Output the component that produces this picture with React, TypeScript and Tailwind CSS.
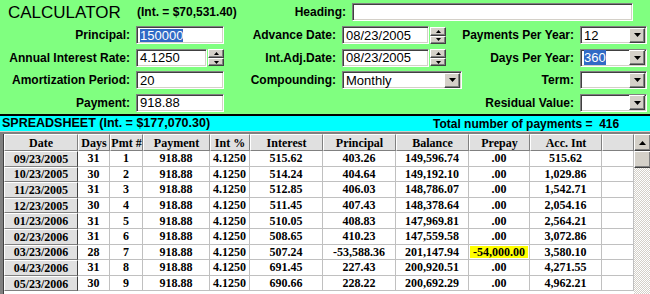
const sunken =
  "bg-white border border-t-[#808080] border-l-[#808080] border-b-white border-r-white shadow-[inset_1px_1px_0_#404040,inset_-1px_-1px_0_#d4d0c8]";
const raised =
  "bg-[#d4d0c8] border border-t-white border-l-white border-r-[#404040] border-b-[#404040] shadow-[inset_-1px_-1px_0_#808080]";

const DownArrow = () => (
  <svg width="7" height="4" viewBox="0 0 7 4">
    <path d="M0 0h7L3.5 4z" fill="#000" />
  </svg>
);

const TinyArrow = ({ up }: { up?: boolean }) => (
  <svg width="5" height="3" viewBox="0 0 5 3">
    <path d={up ? "M0 3h5L2.5 0z" : "M0 0h5L2.5 3z"} fill="#000" />
  </svg>
);

const Field = ({ value, selected, w }: { value?: string; selected?: boolean; w: string }) => (
  <div className={`${sunken} ${w} h-[18px] flex items-center pl-[3px] text-[13px] leading-none`}>
    {selected ? <span className="bg-[#316ac5] text-white">{value}</span> : value}
  </div>
);

const Spinner = () => (
  <div className="flex flex-col w-[16px] h-[17px] ml-[1px]">
    <div className={`${raised} h-[9px] flex items-center justify-center`}>
      <TinyArrow up />
    </div>
    <div className={`${raised} h-[8px] flex items-center justify-center`}>
      <TinyArrow />
    </div>
  </div>
);

const Select = ({ value, selected, w }: { value?: string; selected?: boolean; w: string }) => (
  <div className={`${sunken} ${w} h-[18px] flex items-center pl-[3px] pr-[1px] text-[13px] leading-none`}>
    <div className="flex-1">
      {selected ? <span className="bg-[#316ac5] text-white">{value}</span> : value}
    </div>
    <div className={`${raised} w-[16px] h-[15px] flex items-center justify-center`}>
      <DownArrow />
    </div>
  </div>
);

const Label = ({ text, w }: { text: string; w: string }) => (
  <div className={`${w} text-right text-[12px] font-bold pr-[6px]`}>{text}</div>
);

const cols = [
  { name: "Date", w: "w-[74px]" },
  { name: "Days", w: "w-[32px]" },
  { name: "Pmt #", w: "w-[33px]" },
  { name: "Payment", w: "w-[67px]" },
  { name: "Int %", w: "w-[40px]" },
  { name: "Interest", w: "w-[73px]" },
  { name: "Principal", w: "w-[73px]" },
  { name: "Balance", w: "w-[73px]" },
  { name: "Prepay", w: "w-[61px]" },
  { name: "Acc. Int", w: "w-[72px]" },
  { name: "", w: "w-[32px]" },
];

const rows = [
  ["09/23/2005", "31", "1", "918.88", "4.1250", "515.62", "403.26", "149,596.74", ".00", "515.62"],
  ["10/23/2005", "30", "2", "918.88", "4.1250", "514.24", "404.64", "149,192.10", ".00", "1,029.86"],
  ["11/23/2005", "31", "3", "918.88", "4.1250", "512.85", "406.03", "148,786.07", ".00", "1,542.71"],
  ["12/23/2005", "30", "4", "918.88", "4.1250", "511.45", "407.43", "148,378.64", ".00", "2,054.16"],
  ["01/23/2006", "31", "5", "918.88", "4.1250", "510.05", "408.83", "147,969.81", ".00", "2,564.21"],
  ["02/23/2006", "31", "6", "918.88", "4.1250", "508.65", "410.23", "147,559.58", ".00", "3,072.86"],
  ["03/23/2006", "28", "7", "918.88", "4.1250", "507.24", "-53,588.36", "201,147.94", "-54,000.00", "3,580.10"],
  ["04/23/2006", "31", "8", "918.88", "4.1250", "691.45", "227.43", "200,920.51", ".00", "4,271.55"],
  ["05/23/2006", "30", "9", "918.88", "4.1250", "690.66", "228.22", "200,692.29", ".00", "4,962.21"],
];

export default function App() {
  return (
    <div className="w-[650px] h-[294px] overflow-hidden bg-white text-black font-['Liberation_Sans',Arial,sans-serif]">
      {/* calculator panel */}
      <div className="h-[114px] bg-[#80ff80] pt-[3px]">
        <div className="flex items-center h-[18px]">
          <div className="w-[137px] pl-[8px] text-[17px] leading-none">CALCULATOR</div>
          <div className="w-[133px] text-[12px] font-bold">(Int. = $70,531.40)</div>
          <Label text="Heading:" w="w-[82px]" />
          <Field w="w-[281px]" />
        </div>
        <div className="flex mt-[5px]">
          <div className="flex flex-col gap-[4.5px]">
            <div className="flex items-center">
              <Label text="Principal:" w="w-[136px]" />
              <Field w="w-[88px]" value="150000" selected />
            </div>
            <div className="flex items-center">
              <Label text="Annual Interest Rate:" w="w-[136px]" />
              <Field w="w-[71px]" value="4.1250" />
              <Spinner />
            </div>
            <div className="flex items-center">
              <Label text="Amortization Period:" w="w-[136px]" />
              <Field w="w-[88px]" value="20" />
            </div>
            <div className="flex items-center">
              <Label text="Payment:" w="w-[136px]" />
              <Field w="w-[88px]" value="918.88" />
            </div>
          </div>
          <div className="flex flex-col gap-[4.5px]">
            <div className="flex items-center">
              <Label text="Advance Date:" w="w-[118px]" />
              <Field w="w-[87px]" value="08/23/2005" />
              <Spinner />
            </div>
            <div className="flex items-center">
              <Label text="Int.Adj.Date:" w="w-[118px]" />
              <Field w="w-[87px]" value="08/23/2005" />
              <Spinner />
            </div>
            <div className="flex items-center">
              <Label text="Compounding:" w="w-[118px]" />
              <Select w="w-[120px]" value="Monthly" />
            </div>
          </div>
          <div className="flex flex-col gap-[4.5px]">
            <div className="flex items-center">
              <Label text="Payments Per Year:" w="w-[118px]" />
              <Select w="w-[67px]" value="12" />
            </div>
            <div className="flex items-center">
              <Label text="Days Per Year:" w="w-[118px]" />
              <Select w="w-[67px]" value="360" selected />
            </div>
            <div className="flex items-center">
              <Label text="Term:" w="w-[118px]" />
              <Select w="w-[67px]" />
            </div>
            <div className="flex items-center">
              <Label text="Residual Value:" w="w-[118px]" />
              <Select w="w-[67px]" />
            </div>
          </div>
        </div>
      </div>
      <div className="h-[2px] bg-black" />

      {/* spreadsheet bar */}
      <div className="h-[15px] bg-[#00ffff] flex items-center text-[12.5px] font-bold leading-none">
        <div className="pl-[2px] w-[433px]">SPREADSHEET (Int. = $177,070.30)</div>
        <div className="whitespace-pre text-[12px]">Total number of payments =  416</div>
      </div>

      {/* grid */}
      <div className="flex border-t border-t-[#d4d0c8] h-[200px]">
        <div className="flex-1 border-t-2 border-l-[3px] border-t-[#808080] border-l-[#808080] shadow-[inset_1px_1px_0_#404040] font-['Liberation_Serif','Times_New_Roman',serif] text-[12px] font-bold">
          <div className="flex h-[17px] pl-[1px]">
            {cols.map((c, i) => (
              <div
                key={i}
                className={`${c.w} shrink-0 bg-[#e0e0e0] border border-t-white border-l-white border-r-[#808080] border-b-[#808080] flex items-center justify-center leading-none`}
              >
                {c.name}
              </div>
            ))}
          </div>
          {rows.map((r, ri) => (
            <div key={ri} className="flex h-[15.6px] pl-[1px]">
              {cols.map((c, ci) =>
                ci === 0 ? (
                  <div
                    key={ci}
                    className={`${c.w} shrink-0 bg-[#e0e0e0] border border-t-white border-l-white border-r-[#404040] border-b-[#808080] flex items-center justify-center leading-none`}
                  >
                    {r[0]}
                  </div>
                ) : (
                  <div
                    key={ci}
                    className={`${c.w} shrink-0 border-r border-b border-[#c0c0c0] flex items-center justify-center leading-none p-[1px]`}
                  >
                    {r[ci] !== undefined && (
                      <div
                        className={`w-full h-full flex items-center justify-center ${
                          r[ci] === "-54,000.00" ? "bg-[#ffff00]" : ""
                        }`}
                      >
                        {r[ci]}
                      </div>
                    )}
                  </div>
                ),
              )}
            </div>
          ))}
        </div>
        {/* scrollbar */}
        <div className="w-[17px] shrink-0 flex flex-col border-t-2 border-t-[#808080]">
          <div className={`${raised} h-[17px] flex items-center justify-center`}>
            <svg width="7" height="4" viewBox="0 0 7 4">
              <path d="M0 4h7L3.5 0z" fill="#000" />
            </svg>
          </div>
          <div className={`${raised} h-[17px]`} />
          <div className="flex-1 bg-[repeating-conic-gradient(#d4d0c8_0_25%,#ffffff_0_50%)] bg-[length:2px_2px]" />
        </div>
      </div>
    </div>
  );
}
